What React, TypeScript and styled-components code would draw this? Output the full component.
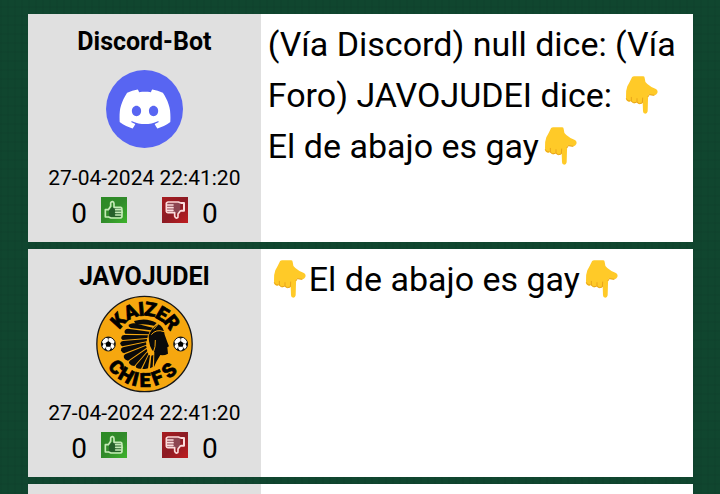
import React from 'react';
import styled, { createGlobalStyle } from 'styled-components';
import { SiDiscord } from 'react-icons/si';

const GlobalStyle = createGlobalStyle`
  * { box-sizing: border-box; }
  body {
    margin: 0;
    font-family: Roboto, "Liberation Sans", sans-serif;
    color: #000;
    background-color: #0f452f;
  }
`;

const Page = styled.main`
  height: 100vh;
  overflow: hidden;
  padding: 14px 27px 0 28px;
  display: flex;
  flex-direction: column;
  gap: 7px;
  background-color: #10462f;
  background-image:
    repeating-linear-gradient(90deg, rgba(0, 0, 0, 0.03) 0 2px, transparent 2px 7px),
    repeating-linear-gradient(0deg, rgba(0, 0, 0, 0.03) 0 2px, transparent 2px 9px);
`;

const Post = styled.article`
  flex: none;
  display: grid;
  grid-template-columns: 35% 1fr;
  min-height: 228px;
  background: #fff;
`;

const Author = styled.aside`
  display: flex;
  flex-direction: column;
  align-items: center;
  padding-top: 14px;
  background: #e0e0e0;
`;

const Name = styled.h2`
  margin: 0;
  font-size: 25px;
  line-height: 28px;
  font-weight: 700;
`;

const AvatarSlot = styled.div`
  height: 106px;
  margin-bottom: 2px;
  display: flex;
  align-items: center;
  justify-content: center;
`;

const Stamp = styled.time`
  font-size: 21px;
  line-height: 28px;
`;

const Votes = styled.div`
  display: flex;
  justify-content: center;
  gap: 35px;
  margin-top: 4px;
`;

const Vote = styled.div<{ $reverse?: boolean }>`
  display: flex;
  flex-direction: ${(p) => (p.$reverse ? 'row-reverse' : 'row')};
  align-items: center;
  gap: 14px;
`;

const Count = styled.span`
  font-size: 28px;
  line-height: 36px;
`;

const VoteButton = styled.button`
  width: 26px;
  height: 26px;
  margin: 0 0 8px;
  padding: 0;
  border: 0;
  background: none;
  cursor: pointer;

  svg { display: block; }
`;

const Message = styled.p`
  margin: 0;
  padding: 5px 7px;
  font-size: 34px;
  line-height: 51px;
`;

const Emoji = styled.svg`
  width: 41px;
  height: 38px;
  vertical-align: -7px;
`;

const PointDown = () => (
  <Emoji viewBox="0 0 123 114" role="img" aria-label="👇">
    <path
      fill="#ffca28"
      d="M36 4Q38 1 43 1H70Q74 1 74 6Q74 18 82 24Q92 33 106 38Q115 42 112 51Q109 59 99 58L86 56Q84 62 84 70L83 106Q82 113 76 113Q69 113 69 106L68 78Q65 85 59 84Q53 84 50 79Q46 83 40 81Q35 80 33 75Q28 79 22 75Q17 72 18 62Q17 44 22 31Q30 17 36 4Z"
    />
    <path
      fill="none"
      stroke="#e9a51b"
      strokeWidth="3"
      strokeLinecap="round"
      d="M19 68Q22 78 30 75M34 64V75Q39 83 49 79M51 68V79Q57 86 67 81L68 66M84 62L88 56L102 58"
    />
  </Emoji>
);

const DiscordAvatar = () => (
  <svg width="77" height="78" viewBox="18 18 231 234" role="img" aria-label="Discord">
    <ellipse cx="133.5" cy="135" rx="115.5" ry="117" fill="#5865f2" />
    <SiDiscord x="58" y="58" size={154} color="#fff" />
  </svg>
);

const Ball = ({ x }: { x: number }) => (
  <g transform={`translate(${x} 165)`}>
    <circle r="21" fill="#fff" stroke="#111" strokeWidth="3" />
    <path d="M0-9L9-2L6 8H-6L-9-2ZM-8-20L0-16L8-20ZM20-7L15 0L19 9ZM-20-7L-15 0L-19 9ZM-14 16L-8 12L-3 20ZM14 16L8 12L3 20Z" />
    <path
      d="M0-9V-16M9-2L15 0M6 8L9 13M-6 8L-9 13M-9-2L-15 0"
      stroke="#222"
      strokeWidth="1.5"
    />
  </g>
);

const crestTop: [string, number][] = [['K', -48], ['A', -23], ['I', -5], ['Z', 10], ['E', 31], ['R', 52]];
const crestBottom: [string, number][] = [['C', 50], ['H', 30], ['I', 14], ['E', -1], ['F', -21], ['S', -43]];

const ChiefsAvatar = () => (
  <svg width="97" height="98" viewBox="18 18 291 294" role="img" aria-label="Kaizer Chiefs">
    <circle cx="163.5" cy="165" r="143" fill="#f6a70f" stroke="#171717" strokeWidth="4" />
    <g fontFamily="Roboto" fontWeight="900" fontSize="58" textAnchor="middle" stroke="#000" strokeWidth="2">
      {crestTop.map(([letter, angle]) => (
        <text key={letter} x="163" y="80" transform={`rotate(${angle} 163 165)`}>{letter}</text>
      ))}
      {crestBottom.map(([letter, angle]) => (
        <text key={letter} x="163" y="294" transform={`rotate(${angle} 163 165)`}>{letter}</text>
      ))}
    </g>
    <Ball x={55} />
    <Ball x={272} />
    <g fill="#0a0a0a">
      <path d="M132 96Q170 84 200 102L192 110Q160 102 138 108Z" />
      <path d="M116 107Q124 101 134 103L188 116L183 124L122 117Q114 112 116 107Z" />
      <path d="M104 125Q108 118 118 120L179 128L176 136L106 134Q102 130 104 125Z" />
      <path d="M94 144Q96 137 105 138L174 139L172 147L98 153Q92 150 94 144Z" />
      <path d="M91 163Q91 157 99 156L171 150L170 157L97 172Q91 170 91 163Z" />
      <path d="M93 184Q92 177 99 175L168 160L169 167L102 193Q95 191 93 184Z" />
      <path d="M102 207Q99 200 105 196L168 170L170 176L114 215Q106 214 102 207Z" />
      <path d="M119 225Q114 220 119 215L170 180L172 186L133 231Q124 231 119 225Z" />
      <path d="M139 236Q135 233 139 228L172 190L175 195L153 239Q145 240 139 236Z" />
      <path d="M157 239L176 198L180 199L174 238Q165 242 157 239Z" />
      <path d="M180 238L184 200L190 198L188 234Z" />
      <path d="M176 140Q186 115 205 106Q221 113 224 137L233 162L237 172L232 175L234 194Q223 200 211 198L200 217L192 234L193 190Q176 176 176 140Z" />
    </g>
    <path
      d="M184 137Q198 119 222 128M190 190Q197 174 196 153M204 106L191 121"
      fill="none"
      stroke="#f6a70f"
      strokeWidth="3"
    />
  </svg>
);

const ThumbUp = () => (
  <svg width="26" height="26" viewBox="0 0 78 78" aria-hidden="true">
    <defs>
      <linearGradient id="up" x2="1" y2="1">
        <stop offset="0" stopColor="#2b8a24" />
        <stop offset="0.5" stopColor="#318a2b" />
        <stop offset="1" stopColor="#3eb42c" />
      </linearGradient>
    </defs>
    <path fill="url(#up)" d="M0 0H78V78H0Z" />
    <path fill="#25602a" d="M24 38L34 30H62V60H24Z" />
    <g fill="none" stroke="#c4eab6" strokeWidth="5" strokeLinejoin="round" strokeLinecap="round">
      <path d="M22 38H13V60H22M23 37L29 28V18Q30 13 35 14Q39 15 39 20V31H59Q64 32 62 38M44 38H63M44 46H64M44 54H63M23 60L30 63H58Q64 62 63 54V38" />
    </g>
  </svg>
);

const ThumbDown = () => (
  <svg width="26" height="26" viewBox="0 0 78 78" aria-hidden="true">
    <defs>
      <linearGradient id="down" x2="1" y2="1">
        <stop offset="0" stopColor="#a91c20" />
        <stop offset="0.5" stopColor="#8c1b24" />
        <stop offset="1" stopColor="#c01d20" />
      </linearGradient>
    </defs>
    <path fill="url(#down)" d="M0 0H78V78H0Z" />
    <path fill="#8d4551" d="M16 18H55V41L46 49H18Z" />
    <g fill="none" stroke="#fbdcdc" strokeWidth="5" strokeLinejoin="round" strokeLinecap="round">
      <path d="M55 17L49 15H18Q12 16 13 22V43Q14 48 20 47H38V58Q40 64 45 63Q49 62 48 56V51L55 42M13 24H33M13 32H33M14 40H33" />
      <path d="M58 18H66V41H58" strokeWidth="6" />
    </g>
  </svg>
);

type PostData = {
  name: string;
  avatar: React.ReactNode;
  date: string;
  up: number;
  down: number;
  message: React.ReactNode;
};

const posts: PostData[] = [
  {
    name: 'Discord-Bot',
    avatar: <DiscordAvatar />,
    date: '27-04-2024 22:41:20',
    up: 0,
    down: 0,
    message: (
      <>
        (Vía Discord) null dice: (Vía Foro) JAVOJUDEI dice: <PointDown />
        <br />
        El de abajo es gay
        <PointDown />
      </>
    ),
  },
  {
    name: 'JAVOJUDEI',
    avatar: <ChiefsAvatar />,
    date: '27-04-2024 22:41:20',
    up: 0,
    down: 0,
    message: (
      <>
        <PointDown />
        El de abajo es gay
        <PointDown />
      </>
    ),
  },
];

export default function App() {
  return (
    <>
      <GlobalStyle />
      <Page>
        {posts.map((post) => (
          <Post key={post.name}>
            <Author>
              <Name>{post.name}</Name>
              <AvatarSlot>{post.avatar}</AvatarSlot>
              <Stamp>{post.date}</Stamp>
              <Votes>
                <Vote>
                  <Count>{post.up}</Count>
                  <VoteButton type="button" aria-label="Me gusta"><ThumbUp /></VoteButton>
                </Vote>
                <Vote $reverse>
                  <Count>{post.down}</Count>
                  <VoteButton type="button" aria-label="No me gusta"><ThumbDown /></VoteButton>
                </Vote>
              </Votes>
            </Author>
            <Message>{post.message}</Message>
          </Post>
        ))}
        <Post>
          <Author />
        </Post>
      </Page>
    </>
  );
}
